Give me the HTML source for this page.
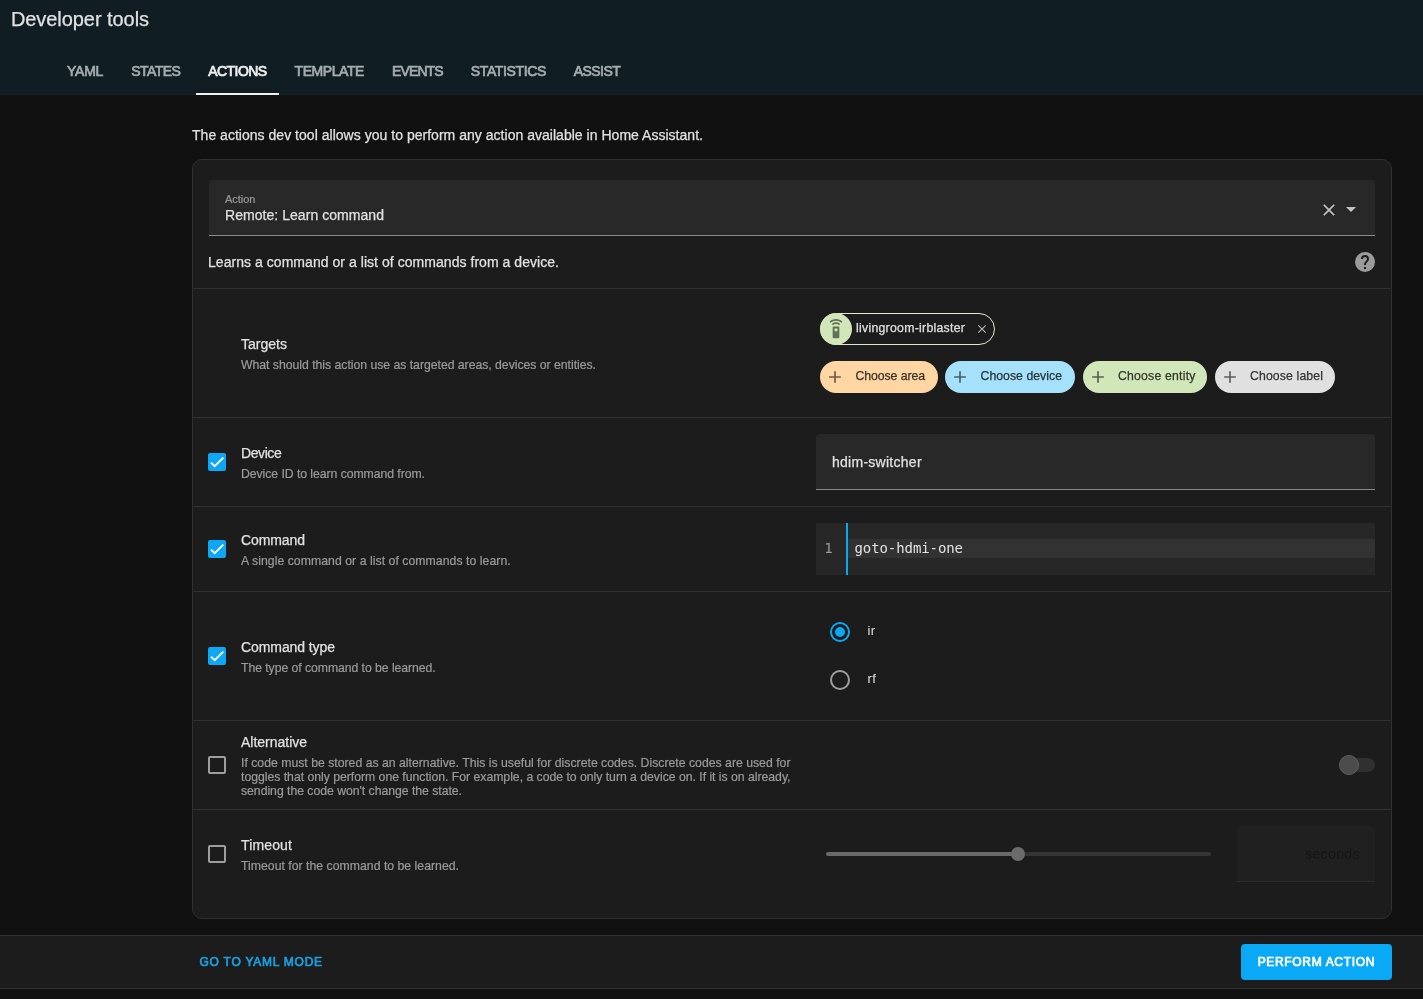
<!DOCTYPE html>
<html lang="en">
<head>
<meta charset="utf-8">
<title>Developer tools</title>
<style>
html,body{margin:0;padding:0;}
html{background:#111111;}
body{width:1423px;height:999px;overflow:hidden;position:relative;font-family:"Liberation Sans",sans-serif;}
.a{position:absolute;box-sizing:border-box;}
.t{position:absolute;white-space:nowrap;line-height:20px;height:20px;}
.hdr{left:0;top:0;width:1423px;height:95px;background:#101e24;}
.ind{left:196px;top:93px;width:83px;height:2px;background:#f1f2f2;}
.card{left:192px;top:159px;width:1200px;height:760px;background:#1c1c1c;border:1px solid #303030;border-radius:10px;}
.div{left:193px;width:1198px;height:1px;background:#303030;}
.field{background:#282828;border-bottom:1px solid #8a8a8a;border-radius:4px 4px 0 0;}
.cb{left:208px;width:18px;height:18px;border-radius:2px;}
.cb.on{background:#0ea7f3;}
.cb.off{border:2px solid #9e9e9e;}
.cb svg{position:absolute;left:0;top:0;width:18px;height:18px;}
.pill{height:32px;border-radius:16px;top:361px;}
.plus{position:absolute;left:5.3px;top:6px;width:20px;height:20px;}
.bar{left:0;top:935px;width:1423px;height:54px;background:#1c1c1c;border-top:1px solid #333333;border-bottom:1px solid #333333;}
.btn{left:1241px;top:944px;width:151px;height:36px;border-radius:4px;background:#0aa9f5;}
</style>
</head>
<body>
<div id="root" style="position:absolute;left:0;top:0;width:1423px;height:999px;will-change:transform;">
<div class="a hdr"></div>
<div class="a" style="left:0;top:94px;width:1423px;height:1px;background:#16242a;"></div>
<div class="a ind"></div>

<div class="a card"></div>
<!-- action field -->
<div class="a field" style="left:209px;top:180px;width:1166px;height:56px;"></div>
<svg class="a" style="left:1319px;top:200px;width:20px;height:20px;" viewBox="0 0 24 24"><path fill="#c4c4c4" d="M19,6.41L17.59,5L12,10.59L6.41,5L5,6.41L10.59,12L5,17.59L6.41,19L12,13.41L17.59,19L19,17.59L13.41,12L19,6.41Z"/></svg>
<svg class="a" style="left:1339px;top:197px;width:24px;height:24px;" viewBox="0 0 24 24"><path fill="#c4c4c4" d="M7,10L12,15L17,10H7Z"/></svg>
<svg class="a" style="left:1353px;top:250px;width:24px;height:24px;" viewBox="0 0 24 24"><path fill="#9b9b9b" d="M15.07,11.25L14.17,12.17C13.45,12.89 13,13.5 13,15H11V14.5C11,13.39 11.45,12.39 12.17,11.67L13.41,10.41C13.78,10.05 14,9.55 14,9C14,7.89 13.1,7 12,7A2,2 0 0,0 10,9H8A4,4 0 0,1 12,5A4,4 0 0,1 16,9C16,9.88 15.64,10.67 15.07,11.25M13,19H11V17H13M12,2A10,10 0 0,0 2,12A10,10 0 0,0 12,22A10,10 0 0,0 22,12C22,6.47 17.5,2 12,2Z"/></svg>

<div class="a div" style="top:288px;"></div>
<div class="a div" style="top:417px;"></div>
<div class="a div" style="top:506px;"></div>
<div class="a div" style="top:591px;"></div>
<div class="a div" style="top:720px;"></div>
<div class="a div" style="top:809px;"></div>

<!-- target chip -->
<div class="a" style="left:820px;top:313px;width:175px;height:32px;border-radius:16px;border:1px solid #e4e8d2;"></div>
<div class="a" style="left:820px;top:313px;width:32px;height:32px;border-radius:16px;background:#d2e7b9;"></div>
<svg class="a" style="left:825.7px;top:319px;width:20px;height:20px;" viewBox="0 0 24 24"><path fill="#5f7054" d="M12,0C8.96,0 6.21,1.23 4.22,3.22L5.63,4.63C7.26,3 9.5,2 12,2C14.5,2 16.74,3 18.36,4.64L19.77,3.23C17.79,1.23 15.04,0 12,0M7.05,6.05L8.46,7.46C9.37,6.56 10.62,6 12,6C13.38,6 14.63,6.56 15.54,7.46L16.95,6.05C15.68,4.78 13.93,4 12,4C10.07,4 8.32,4.78 7.05,6.05M12,15A2,2 0 0,1 10,13A2,2 0 0,1 12,11A2,2 0 0,1 14,13A2,2 0 0,1 12,15M15,9H9A1,1 0 0,0 8,10V22A1,1 0 0,0 9,23H15A1,1 0 0,0 16,22V10A1,1 0 0,0 15,9Z"/></svg>
<svg class="a" style="left:975.2px;top:322px;width:14px;height:14px;" viewBox="0 0 24 24"><path fill="#b5b5b5" d="M19,6.41L17.59,5L12,10.59L6.41,5L5,6.41L10.59,12L5,17.59L6.41,19L12,13.41L17.59,19L19,17.59L13.41,12L19,6.41Z"/></svg>

<!-- choose pills -->
<div class="a pill" style="left:820px;width:118px;background:#fed6a4;"><svg class="plus" viewBox="0 0 24 24"><path fill="#6b5a45" d="M19,13H13V19H11V13H5V11H11V5H13V11H19V13Z"/></svg></div>
<div class="a pill" style="left:945px;width:130px;background:#a6e1fb;"><svg class="plus" viewBox="0 0 24 24"><path fill="#466069" d="M19,13H13V19H11V13H5V11H11V5H13V11H19V13Z"/></svg></div>
<div class="a pill" style="left:1083px;width:124px;background:#d2e7b9;"><svg class="plus" viewBox="0 0 24 24"><path fill="#58614d" d="M19,13H13V19H11V13H5V11H11V5H13V11H19V13Z"/></svg></div>
<div class="a pill" style="left:1215px;width:120px;background:#e0e0e0;"><svg class="plus" viewBox="0 0 24 24"><path fill="#5e5e5e" d="M19,13H13V19H11V13H5V11H11V5H13V11H19V13Z"/></svg></div>

<!-- checkboxes -->
<div class="a cb on" style="top:453px;"><svg viewBox="0 0 24 24"><path fill="none" stroke="#fff" stroke-width="2.43" d="M4.0,12.7 8.95,17.67 20.4,6.24"/></svg></div>
<div class="a cb on" style="top:540px;"><svg viewBox="0 0 24 24"><path fill="none" stroke="#fff" stroke-width="2.43" d="M4.0,12.7 8.95,17.67 20.4,6.24"/></svg></div>
<div class="a cb on" style="top:647px;"><svg viewBox="0 0 24 24"><path fill="none" stroke="#fff" stroke-width="2.43" d="M4.0,12.7 8.95,17.67 20.4,6.24"/></svg></div>
<div class="a cb off" style="top:756px;"></div>
<div class="a cb off" style="top:845px;"></div>

<!-- device field -->
<div class="a field" style="left:816px;top:434px;width:559px;height:56px;"></div>

<!-- code editor -->
<div class="a" style="left:816px;top:523px;width:559px;height:52px;background:#272727;"></div>
<div class="a" style="left:848px;top:538.5px;width:527px;height:19.6px;background:#323232;"></div>
<div class="a" style="left:846px;top:523px;width:2px;height:52px;background:#0ea7f3;"></div>

<!-- radios -->
<div class="a" style="left:830px;top:622px;width:20px;height:20px;border-radius:10px;border:2px solid #0ea7f3;"></div>
<div class="a" style="left:835px;top:627px;width:10px;height:10px;border-radius:5px;background:#0ea7f3;"></div>
<div class="a" style="left:830px;top:670px;width:20px;height:20px;border-radius:10px;border:2px solid #9e9e9e;"></div>

<!-- toggle -->
<div class="a" style="left:1343px;top:758px;width:32px;height:14px;border-radius:7px;background:#303030;"></div>
<div class="a" style="left:1339px;top:755px;width:20px;height:20px;border-radius:10px;background:#4c4c4c;border:1.5px solid #5e5e5e;"></div>

<!-- slider -->
<div class="a" style="left:826px;top:852px;width:385px;height:4px;border-radius:2px;background:#353535;"></div>
<div class="a" style="left:826px;top:852px;width:192px;height:4px;border-radius:2px;background:#696969;"></div>
<div class="a" style="left:1011px;top:847px;width:14px;height:14px;border-radius:7px;background:#6c6c6c;"></div>

<!-- seconds field -->
<div class="a" style="left:1237px;top:826px;width:138px;height:56px;background:#202020;border-bottom:1px solid #2d2d2d;border-radius:4px 4px 0 0;"></div>

<!-- bottom bar -->
<div class="a bar"></div>
<div class="a btn"></div>

<span class="t" id="title" style="left:10.9px;top:9.00px;font-size:20px;font-weight:400;color:#e1e1e1;letter-spacing:-0.060px;-webkit-text-stroke:0.25px currentColor;">Developer tools</span>
<span class="t" id="tab1" style="left:67.0px;top:61.00px;font-size:14px;font-weight:400;color:#a4acaf;letter-spacing:-0.255px;-webkit-text-stroke:0.7px currentColor;">YAML</span>
<span class="t" id="tab2" style="left:131.3px;top:61.00px;font-size:14px;font-weight:400;color:#a4acaf;letter-spacing:-0.562px;-webkit-text-stroke:0.7px currentColor;">STATES</span>
<span class="t" id="tab3" style="left:208.2px;top:61.00px;font-size:14px;font-weight:400;color:#eef0f0;letter-spacing:-0.544px;-webkit-text-stroke:0.7px currentColor;">ACTIONS</span>
<span class="t" id="tab4" style="left:294.5px;top:61.00px;font-size:14px;font-weight:400;color:#a4acaf;letter-spacing:-0.423px;-webkit-text-stroke:0.7px currentColor;">TEMPLATE</span>
<span class="t" id="tab5" style="left:392.0px;top:61.00px;font-size:14px;font-weight:400;color:#a4acaf;letter-spacing:-0.876px;-webkit-text-stroke:0.7px currentColor;">EVENTS</span>
<span class="t" id="tab6" style="left:470.8px;top:61.00px;font-size:14px;font-weight:400;color:#a4acaf;letter-spacing:-0.361px;-webkit-text-stroke:0.7px currentColor;">STATISTICS</span>
<span class="t" id="tab7" style="left:573.8px;top:61.00px;font-size:14px;font-weight:400;color:#a4acaf;letter-spacing:-0.563px;-webkit-text-stroke:0.7px currentColor;">ASSIST</span>
<span class="t" id="intro" style="left:192.0px;top:125.00px;font-size:14px;font-weight:400;color:#e1e1e1;letter-spacing:0.025px;-webkit-text-stroke:0.25px currentColor;">The actions dev tool allows you to perform any action available in Home Assistant.</span>
<span class="t" id="alabel" style="left:225.0px;top:189.00px;font-size:11px;font-weight:400;color:#9b9b9b;letter-spacing:-0.032px;-webkit-text-stroke:0.2px currentColor;">Action</span>
<span class="t" id="aval" style="left:225.0px;top:205.00px;font-size:14px;font-weight:400;color:#e1e1e1;letter-spacing:0.050px;-webkit-text-stroke:0.25px currentColor;">Remote: Learn command</span>
<span class="t" id="desc" style="left:208.0px;top:252.00px;font-size:14px;font-weight:400;color:#e1e1e1;letter-spacing:0.046px;-webkit-text-stroke:0.25px currentColor;">Learns a command or a list of commands from a device.</span>
<span class="t" id="h0" style="left:241.0px;top:334.00px;font-size:14px;font-weight:400;color:#e1e1e1;letter-spacing:0.012px;-webkit-text-stroke:0.25px currentColor;">Targets</span>
<span class="t" id="s0" style="left:241.0px;top:355.00px;font-size:12.25px;font-weight:400;color:#9b9b9b;letter-spacing:-0.027px;-webkit-text-stroke:0.2px currentColor;">What should this action use as targeted areas, devices or entities.</span>
<span class="t" id="h1" style="left:241.0px;top:443.00px;font-size:14px;font-weight:400;color:#e1e1e1;letter-spacing:-0.418px;-webkit-text-stroke:0.25px currentColor;">Device</span>
<span class="t" id="s1" style="left:241.0px;top:464.00px;font-size:12.25px;font-weight:400;color:#9b9b9b;letter-spacing:-0.059px;-webkit-text-stroke:0.2px currentColor;">Device ID to learn command from.</span>
<span class="t" id="h2" style="left:241.0px;top:530.00px;font-size:14px;font-weight:400;color:#e1e1e1;letter-spacing:-0.091px;-webkit-text-stroke:0.25px currentColor;">Command</span>
<span class="t" id="s2" style="left:241.0px;top:551.00px;font-size:12.25px;font-weight:400;color:#9b9b9b;letter-spacing:0.044px;-webkit-text-stroke:0.2px currentColor;">A single command or a list of commands to learn.</span>
<span class="t" id="h3" style="left:241.0px;top:637.00px;font-size:14px;font-weight:400;color:#e1e1e1;letter-spacing:-0.082px;-webkit-text-stroke:0.25px currentColor;">Command type</span>
<span class="t" id="s3" style="left:241.0px;top:658.00px;font-size:12.25px;font-weight:400;color:#9b9b9b;letter-spacing:-0.063px;-webkit-text-stroke:0.2px currentColor;">The type of command to be learned.</span>
<span class="t" id="h4" style="left:241.0px;top:732.00px;font-size:14px;font-weight:400;color:#e1e1e1;letter-spacing:-0.015px;-webkit-text-stroke:0.25px currentColor;">Alternative</span>
<span class="t" id="s4a" style="left:241.0px;top:753.00px;font-size:12.25px;font-weight:400;color:#9b9b9b;letter-spacing:0.002px;-webkit-text-stroke:0.2px currentColor;">If code must be stored as an alternative. This is useful for discrete codes. Discrete codes are used for</span>
<span class="t" id="s4b" style="left:241.0px;top:767.00px;font-size:12.25px;font-weight:400;color:#9b9b9b;letter-spacing:-0.024px;-webkit-text-stroke:0.2px currentColor;">toggles that only perform one function. For example, a code to only turn a device on. If it is on already,</span>
<span class="t" id="s4c" style="left:241.0px;top:781.00px;font-size:12.25px;font-weight:400;color:#9b9b9b;letter-spacing:-0.034px;-webkit-text-stroke:0.2px currentColor;">sending the code won&#39;t change the state.</span>
<span class="t" id="h5" style="left:241.0px;top:835.00px;font-size:14px;font-weight:400;color:#e1e1e1;letter-spacing:0.144px;-webkit-text-stroke:0.25px currentColor;">Timeout</span>
<span class="t" id="s5" style="left:241.0px;top:856.00px;font-size:12.25px;font-weight:400;color:#9b9b9b;letter-spacing:0.015px;-webkit-text-stroke:0.2px currentColor;">Timeout for the command to be learned.</span>
<span class="t" id="chip" style="left:856.0px;top:318.00px;font-size:12.25px;font-weight:400;color:#e1e1e1;letter-spacing:0.283px;-webkit-text-stroke:0.25px currentColor;">livingroom-irblaster</span>
<span class="t" id="c1" style="left:855.5px;top:366.00px;font-size:12.25px;font-weight:400;color:#3b3226;letter-spacing:-0.062px;-webkit-text-stroke:0.25px currentColor;">Choose area</span>
<span class="t" id="c2" style="left:980.5px;top:366.00px;font-size:12.25px;font-weight:400;color:#26343b;letter-spacing:0.036px;-webkit-text-stroke:0.25px currentColor;">Choose device</span>
<span class="t" id="c3" style="left:1118.0px;top:366.00px;font-size:12.25px;font-weight:400;color:#31372b;letter-spacing:0.207px;-webkit-text-stroke:0.25px currentColor;">Choose entity</span>
<span class="t" id="c4" style="left:1250.0px;top:366.00px;font-size:12.25px;font-weight:400;color:#343434;letter-spacing:0.129px;-webkit-text-stroke:0.25px currentColor;">Choose label</span>
<span class="t" id="dev" style="left:832.0px;top:452.00px;font-size:14px;font-weight:400;color:#e1e1e1;letter-spacing:0.267px;-webkit-text-stroke:0.25px currentColor;">hdim-switcher</span>
<span class="t" id="ln" style="left:824.2px;top:538.00px;font-size:14px;font-weight:400;color:#9b9b9b;letter-spacing:0.000px;font-family:'DejaVu Sans Mono', 'Liberation Mono', monospace;">1</span>
<span class="t" id="code" style="left:854.5px;top:538.00px;font-size:14px;font-weight:400;color:#e1e1e1;letter-spacing:-0.086px;font-family:'DejaVu Sans Mono', 'Liberation Mono', monospace;">goto-hdmi-one</span>
<span class="t" id="r1" style="left:867.5px;top:621.00px;font-size:13px;font-weight:400;color:#e1e1e1;letter-spacing:0.321px;">ir</span>
<span class="t" id="r2" style="left:867.5px;top:669.00px;font-size:13px;font-weight:400;color:#e1e1e1;letter-spacing:0.498px;">rf</span>
<span class="t" id="sec" style="left:1305.0px;top:844.00px;font-size:14px;font-weight:400;color:#151515;letter-spacing:0.391px;">seconds</span>
<span class="t" id="yaml" style="left:199.5px;top:952.00px;font-size:12px;font-weight:400;color:#1c9fe0;letter-spacing:0.756px;-webkit-text-stroke:0.7px currentColor;">GO TO YAML MODE</span>
<span class="t" id="perf" style="left:1257.7px;top:952.00px;font-size:12px;font-weight:400;color:#ffffff;letter-spacing:0.666px;-webkit-text-stroke:0.7px currentColor;">PERFORM ACTION</span>
</div>
</body>
</html>
